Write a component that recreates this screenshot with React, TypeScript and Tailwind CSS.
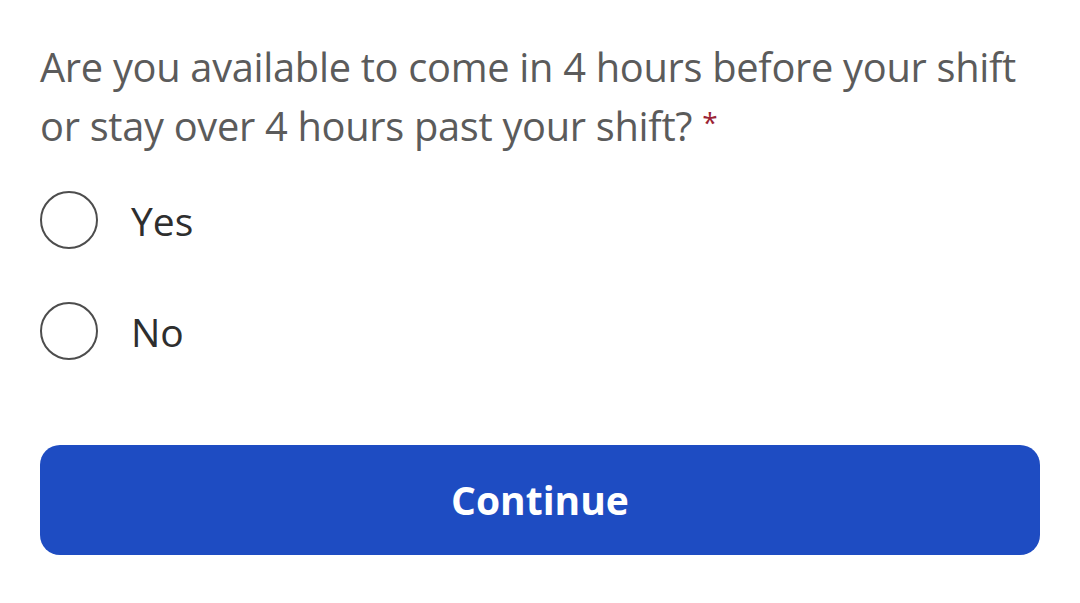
import React from "react";

function Radio({ label }: { label: string }) {
  return (
    <div className="flex items-center h-[58px]">
      <div className="w-[58px] h-[58px] rounded-full border-2 border-[#4d4d4d] bg-white shrink-0" />
      <span className="ml-[33px] text-[39px] text-[#2e2e2e] leading-none">{label}</span>
    </div>
  );
}

export default function App() {
  return (
    <div className="w-[1080px] h-[603px] bg-white overflow-hidden" style={{ fontFamily: '"Open Sans", "Noto Sans", sans-serif' }}>
      <div className="px-[40px] pt-[37px]">
        <p className="text-[39.8px] leading-[59px] text-[#5b5b5b] tracking-[-0.3px] whitespace-nowrap">
          Are you available to come in 4 hours before your shift
          <br />
          or stay over 4 hours past your shift?
          <span className="text-[#9b2335] text-[28px] ml-[10px] relative top-[-8px]">*</span>
        </p>
        <div className="mt-[31px] flex flex-col gap-[53px]">
          <Radio label="Yes" />
          <Radio label="No" />
        </div>
        <button className="mt-[85px] w-full h-[110px] rounded-[20px] bg-[#1e4cc2] text-white font-bold text-[39px]">
          Continue
        </button>
      </div>
    </div>
  );
}
